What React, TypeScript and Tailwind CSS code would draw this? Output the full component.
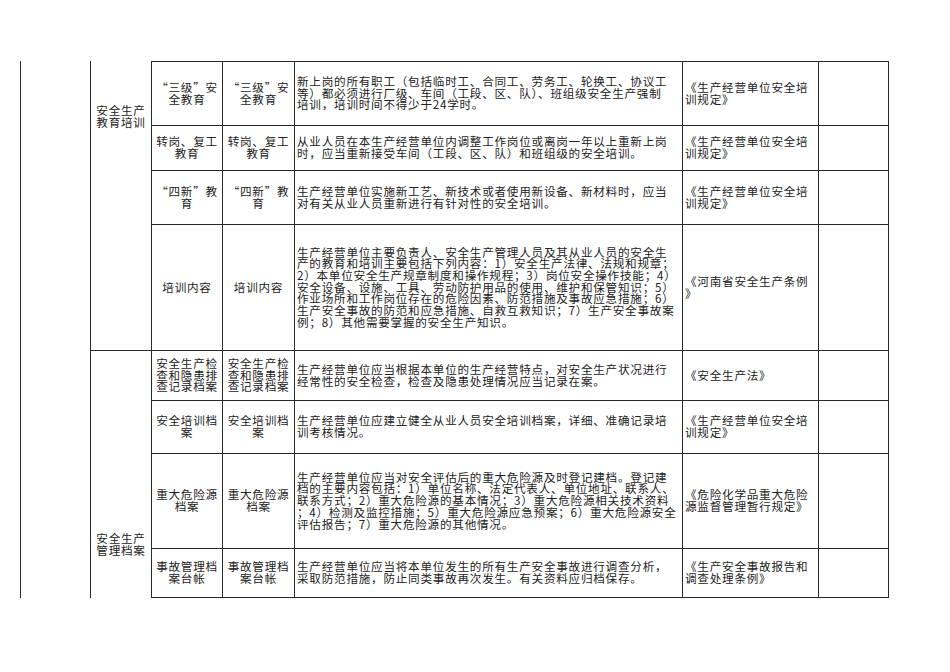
const rows = [
  {
    item: ["“三级”安", "全教育"],
    desc: [
      "新上岗的所有职工（包括临时工、合同工、劳务工、轮换工、协议工",
      "等）都必须进行厂级、车间（工段、区、队）、班组级安全生产强制",
      "培训，培训时间不得少于24学时。",
    ],
    ref: ["《生产经营单位安全培", "训规定》"],
  },
  {
    item: ["转岗、复工", "教育"],
    desc: [
      "从业人员在本生产经营单位内调整工作岗位或离岗一年以上重新上岗",
      "时，应当重新接受车间（工段、区、队）和班组级的安全培训。",
    ],
    ref: ["《生产经营单位安全培", "训规定》"],
  },
  {
    item: ["“四新”教", "育"],
    desc: [
      "生产经营单位实施新工艺、新技术或者使用新设备、新材料时，应当",
      "对有关从业人员重新进行有针对性的安全培训。",
    ],
    ref: ["《生产经营单位安全培", "训规定》"],
  },
  {
    item: ["培训内容"],
    desc: [
      "生产经营单位主要负责人、安全生产管理人员及其从业人员的安全生",
      "产的教育和培训主要包括下列内容：1）安全生产法律、法规和规章；",
      "2）本单位安全生产规章制度和操作规程；3）岗位安全操作技能；4）",
      "安全设备、设施、工具、劳动防护用品的使用、维护和保管知识；5）",
      "作业场所和工作岗位存在的危险因素、防范措施及事故应急措施；6）",
      "生产安全事故的防范和应急措施、自救互救知识；7）生产安全事故案",
      "例；8）其他需要掌握的安全生产知识。",
    ],
    ref: ["《河南省安全生产条例", "》"],
  },
  {
    item: ["安全生产检", "查和隐患排", "查记录档案"],
    desc: [
      "生产经营单位应当根据本单位的生产经营特点，对安全生产状况进行",
      "经常性的安全检查，检查及隐患处理情况应当记录在案。",
    ],
    ref: ["《安全生产法》"],
  },
  {
    item: ["安全培训档", "案"],
    desc: [
      "生产经营单位应建立健全从业人员安全培训档案，详细、准确记录培",
      "训考核情况。",
    ],
    ref: ["《生产经营单位安全培", "训规定》"],
  },
  {
    item: ["重大危险源", "档案"],
    desc: [
      "生产经营单位应当对安全评估后的重大危险源及时登记建档。登记建",
      "档的主要内容包括：1）单位名称、法定代表人、单位地址、联系人、",
      "联系方式；2）重大危险源的基本情况；3）重大危险源相关技术资料",
      "；4）检测及监控措施；5）重大危险源应急预案；6）重大危险源安全",
      "评估报告；7）重大危险源的其他情况。",
    ],
    ref: ["《危险化学品重大危险", "源监督管理暂行规定》"],
  },
  {
    item: ["事故管理档", "案台帐"],
    desc: [
      "生产经营单位应当将本单位发生的所有生产安全事故进行调查分析，",
      "采取防范措施，防止同类事故再次发生。有关资料应归档保存。",
    ],
    ref: ["《生产安全事故报告和", "调查处理条例》"],
  },
];

function Lines({ lines }: { lines: string[] }) {
  return (
    <div>
      {lines.map((l, i) => (
        <div key={i} className="whitespace-nowrap">
          {l}
        </div>
      ))}
    </div>
  );
}

function Row({ r, first }: { r: (typeof rows)[number]; first: boolean }) {
  const base = "border-r border-b border-[#2b2b2b] flex items-center" + (first ? " border-t" : "");
  return (
    <>
      <div className={base + " justify-center text-center"}>
        <Lines lines={r.item} />
      </div>
      <div className={base + " justify-center text-center"}>
        <Lines lines={r.item} />
      </div>
      <div className={base + " pl-[2px]"}>
        <Lines lines={r.desc} />
      </div>
      <div className={base + " pl-[2px]"}>
        <Lines lines={r.ref} />
      </div>
      <div className={base}></div>
    </>
  );
}

export default function App() {
  return (
    <div className="w-[950px] h-[672px] bg-white pt-[61px] pl-[20px] font-['Noto_Sans_CJK_SC','Noto_Sans',sans-serif] text-[11.6px] leading-[11.7px] tracking-[0.75px] text-[#222]">
      <div className="grid grid-cols-[71px_61px_71px_72px_388px_136px_70px] grid-rows-[65px_45px_54px_126px_50px_53px_95px_49px] w-max">
        <div className="row-span-8 border-l border-r border-[#2b2b2b]"></div>
        <div className="row-span-4 border-r border-b border-[#2b2b2b] flex justify-center pt-[44px] text-center">
          <Lines lines={["安全生产", "教育培训"]} />
        </div>
        {rows.slice(0, 4).map((r, i) => (
          <Row key={i} r={r} first={i === 0} />
        ))}
        <div className="row-span-4 border-r border-[#2b2b2b] flex justify-center pt-[182px] text-center">
          <Lines lines={["安全生产", "管理档案"]} />
        </div>
        {rows.slice(4).map((r, i) => (
          <Row key={i + 4} r={r} first={false} />
        ))}
      </div>
    </div>
  );
}
